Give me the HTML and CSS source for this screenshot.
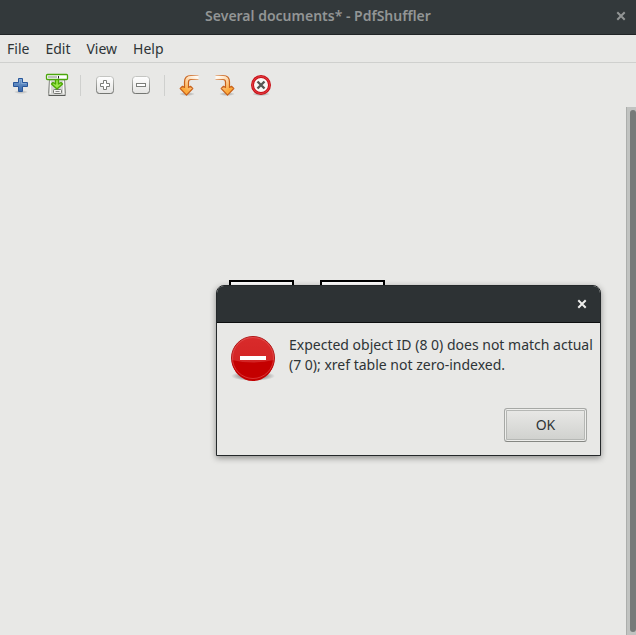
FILE: index.html
```html
<!DOCTYPE html>
<html lang="en">
<head>
<meta charset="utf-8">
<title>PdfShuffler</title>
<link rel="stylesheet" href="styles.css">
</head>
<body>
<svg class="defs" aria-hidden="true">
  <defs>
    <linearGradient id="blue" x1="0" y1="0" x2="0" y2="1"><stop offset="0" stop-color="#7ba4d2"/><stop offset="1" stop-color="#3867aa"/></linearGradient>
    <linearGradient id="paper" x1="0" y1="0" x2="0" y2="1"><stop offset="0" stop-color="#ffffff"/><stop offset="1" stop-color="#e4e4e2"/></linearGradient>
    <linearGradient id="rim" x1="0" y1="0" x2="0" y2="1"><stop offset="0" stop-color="#c4c5c2"/><stop offset="1" stop-color="#747672"/></linearGradient>
    <linearGradient id="orange" gradientUnits="userSpaceOnUse" x1="16" y1="2" x2="6" y2="16"><stop offset="0" stop-color="#fffaf4"/><stop offset="0.5" stop-color="#fdd09c"/><stop offset="1" stop-color="#fcaa3c"/></linearGradient>
    <linearGradient id="orange-rim" gradientUnits="userSpaceOnUse" x1="22" y1="2" x2="10" y2="6"><stop offset="0" stop-color="#d8772c" stop-opacity="0.3"/><stop offset="1" stop-color="#c8611a"/></linearGradient>
    <linearGradient id="red" x1="0" y1="0" x2="0" y2="1"><stop offset="0" stop-color="#d92b2b"/><stop offset="1" stop-color="#cf2020"/></linearGradient>
    <radialGradient id="shade"><stop offset="0" stop-color="#000" stop-opacity="0.5"/><stop offset="0.6" stop-color="#000" stop-opacity="0.3"/><stop offset="1" stop-color="#000" stop-opacity="0"/></radialGradient>
    <g id="turn">
      <ellipse cx="8" cy="20" rx="8" ry="2" fill="url(#shade)" opacity="0.5"/>
      <path d="M19.500 1.500H12Q5.500 1.500 5.500 8V13.500L3.500 12.300L1.200 14.500L7.500 21.200L13.800 14.500L11.500 12.300L9.500 13.500V8Q9.500 5.500 12 5.500H19.500" fill="url(#orange)" stroke="url(#orange-rim)" stroke-width="1.200" stroke-linejoin="round"/>
    </g>
  </defs>
</svg>
<main class="window">
  <header class="titlebar">
    <h1 class="title">Several documents* - PdfShuffler</h1>
    <button class="close" aria-label="Close window"><svg width="10" height="10" viewBox="0 0 10 10"><path d="M2 2L8 8M8 2L2 8"/></svg></button>
  </header>
  <nav class="menubar">
    <button>File</button><button>Edit</button><button>View</button><button>Help</button>
  </nav>
  <div class="toolbar">
    <button class="tool" aria-label="Add">
      <svg width="24" height="24" viewBox="0 0 24 24"><ellipse cx="12" cy="19" rx="7" ry="2" fill="url(#shade)" opacity="0.4"/><path d="M9.500 5.500H13.500V9.500H18.500V13.500H13.500V18.500H9.500V13.500H4.500V9.500H9.500Z" fill="url(#blue)" stroke="#28569a" stroke-linejoin="round"/><path d="M10.500 10.500V6.500H12.500V10.500H17.500" fill="none" stroke="#91b4dc" opacity="0.7"/></svg>
    </button>
    <button class="tool" aria-label="Export">
      <svg width="24" height="24" viewBox="0 0 24 24"><path d="M4.500 6.500H19.500L20.500 20.500Q20.500 22.500 19 22.500H5Q3.500 22.500 3.500 20.500Z" fill="#d4d5d2" stroke="#888a85"/><path d="M3.500 22.500H20.500" stroke="#595b58"/><path d="M5.500 8V20.500M18.500 8V20.500" stroke="#f8f8f6"/><rect x="8.500" y="16.500" width="8" height="4" rx="1" fill="#f4f4f2" stroke="#737570"/><path d="M10.500 18.500H14.500" stroke="#888"/><path d="M10.500 6V11L8 9.500L6.500 11L12 16L17.500 11L16 9.500L13.500 11V6Z" fill="#9be84a" stroke="#4ca706" stroke-width="1.400" stroke-linejoin="round"/><rect x="1.500" y="1.500" width="21" height="5" rx="1" fill="#fff" stroke="#4ba60c" stroke-width="1.300"/><path d="M3 4H12" stroke="#bfc1be" stroke-width="2"/><path d="M13.500 3V5.500" stroke="#222"/></svg>
    </button>
    <span class="separator"></span>
    <button class="tool" aria-label="Zoom in">
      <svg width="24" height="24" viewBox="0 0 24 24"><rect x="3.500" y="4" width="17" height="17" rx="3" fill="#70706e" opacity="0.6"/><rect x="3.500" y="3.500" width="17" height="17" rx="3" fill="url(#paper)" stroke="url(#rim)"/><path d="M10.500 7.500H13.500V10.500H16.500V13.500H13.500V16.500H10.500V13.500H7.500V10.500H10.500Z" fill="#fff" stroke="#7b7d79"/></svg>
    </button>
    <button class="tool" aria-label="Zoom out">
      <svg width="24" height="24" viewBox="0 0 24 24"><rect x="3.500" y="4" width="17" height="17" rx="3" fill="#70706e" opacity="0.6"/><rect x="3.500" y="3.500" width="17" height="17" rx="3" fill="url(#paper)" stroke="url(#rim)"/><rect x="7.500" y="10.500" width="9" height="3" fill="#fff" stroke="#7b7d79"/></svg>
    </button>
    <span class="separator"></span>
    <button class="tool" aria-label="Rotate left">
      <svg width="24" height="24" viewBox="0 0 24 24"><use href="#turn" x="2" y="1"/></svg>
    </button>
    <button class="tool" aria-label="Rotate right">
      <svg width="24" height="24" viewBox="0 0 24 24"><g transform="translate(24 0) scale(-1 1)"><use href="#turn" x="2" y="1"/></g></svg>
    </button>
    <button class="tool" aria-label="Delete">
      <svg width="24" height="24" viewBox="0 0 24 24"><ellipse cx="12" cy="21" rx="9" ry="2" fill="url(#shade)" opacity="0.6"/><circle cx="12" cy="12" r="8.500" fill="#f8f8f6" stroke="#c71017" stroke-width="3"/><circle cx="12" cy="12" r="8.500" fill="none" stroke="#e64046"/><path d="M8.500 8.500L15.500 15.500M15.500 8.500L8.500 15.500" stroke="#555753" stroke-width="2.400"/></svg>
    </button>
  </div>
  <section class="workspace">
    <div class="pages"><div class="page"></div><div class="page"></div></div>
    <div class="scrollbar"><div class="thumb"></div></div>
  </section>
</main>
<div class="dialog" role="alertdialog" aria-describedby="message">
  <header class="dialog-bar">
    <button class="close" aria-label="Close dialog"><svg width="10" height="10" viewBox="0 0 10 10"><path d="M2 2L8 8M8 2L2 8"/></svg></button>
  </header>
  <div class="dialog-body">
    <svg class="error" width="48" height="48" viewBox="0 0 48 48"><ellipse cx="24" cy="41" rx="22" ry="5" fill="url(#shade)"/><circle cx="24" cy="23" r="21.500" fill="url(#red)" stroke="#b11818"/><path d="M3 25Q24 30 45 25A21 21 0 0 1 3 25Z" fill="#c40000"/><circle cx="24" cy="23" r="20.500" fill="none" stroke="#ed6666" opacity="0.5"/><rect x="11" y="21" width="26" height="4" fill="#fff"/></svg>
    <p id="message">Expected object ID (8 0) does not match actual (7 0); xref table not zero-indexed.</p>
  </div>
  <div class="actions"><button class="ok">OK</button></div>
</div>
</body>
</html>
```
FILE: styles.css
```css
* {
  box-sizing: border-box;
}

body {
  margin: 0;
  background: #e8e8e6;
  color: #2e3436;
  font: 14px/20px "Noto Sans", "Open Sans", sans-serif;
}

button {
  padding: 0;
  border: 0;
  background: none;
  color: inherit;
  font: inherit;
}

svg {
  display: block;
}

.defs {
  position: absolute;
  width: 0;
  height: 0;
}

.window {
  display: flex;
  flex-direction: column;
  min-height: 100vh;
}

.titlebar {
  display: grid;
  grid-template-columns: 10px 1fr 10px;
  align-items: center;
  height: 35px;
  padding: 0 10px 2px;
  border-bottom: 1px solid #202426;
  background: #33393b;
  color: #929595;
}

.title {
  grid-column: 2;
  margin: 0;
  text-align: center;
  font-size: 14px;
  line-height: 20px;
  font-weight: 600;
}

.close path {
  fill: none;
  stroke: currentColor;
  stroke-width: 2;
  stroke-linecap: square;
}

.menubar {
  display: flex;
  gap: 16px;
  height: 28px;
  padding: 0 7px;
  border-bottom: 1px solid #cfd0ce;
}

.toolbar {
  display: flex;
  align-items: center;
  gap: 12px;
  height: 44px;
  padding: 0 9px;
}

.separator {
  width: 1px;
  height: 21px;
  margin: 0 0 0 -1px;
  background: #cfd0ce;
}

.workspace {
  display: flex;
  flex: 1;
}

.pages {
  display: flex;
  flex: 1;
  justify-content: center;
  gap: 26px;
  padding: 173px 12px 0 0;
}

.page {
  width: 65px;
  height: 90px;
  border: 2px solid #000;
  background: #fff;
}

.scrollbar {
  display: flex;
  width: 10px;
  padding: 3px 0 3px 3px;
  border-left: 1px solid #acaeac;
  background: #c1c3c1;
}

.thumb {
  flex: 1;
  border-radius: 3px;
  background: #767a79;
}

.dialog {
  position: absolute;
  top: 285px;
  right: 35px;
  width: 385px;
  border: 1px solid #24282a;
  border-radius: 8px 8px 0 0;
  background: #e8e8e6;
  box-shadow: 0 2px 6px rgba(0, 0, 0, 0.4);
}

.dialog-bar {
  display: flex;
  align-items: center;
  justify-content: flex-end;
  height: 37px;
  padding: 0 13px;
  border-bottom: 1px solid #0c0e0f;
  border-radius: 7px 7px 0 0;
  background: #2d3234;
  color: #eeeeec;
}

.dialog-body {
  display: flex;
  gap: 12px;
  padding: 12px 4px 0 12px;
}

.error {
  flex: none;
}

.dialog-body p {
  margin: 0;
}

.actions {
  display: flex;
  justify-content: flex-end;
  padding: 25px 13px 13px;
}

.ok {
  width: 83px;
  height: 34px;
  border: 1px solid #a6a8a5;
  border-bottom-color: #858783;
  border-radius: 3px;
  background: linear-gradient(#e9e9e7, #cfd0cd);
  box-shadow: inset 0 0 0 1px #eeeeec, inset 0 0 0 2px #b5b7b4;
}
```
